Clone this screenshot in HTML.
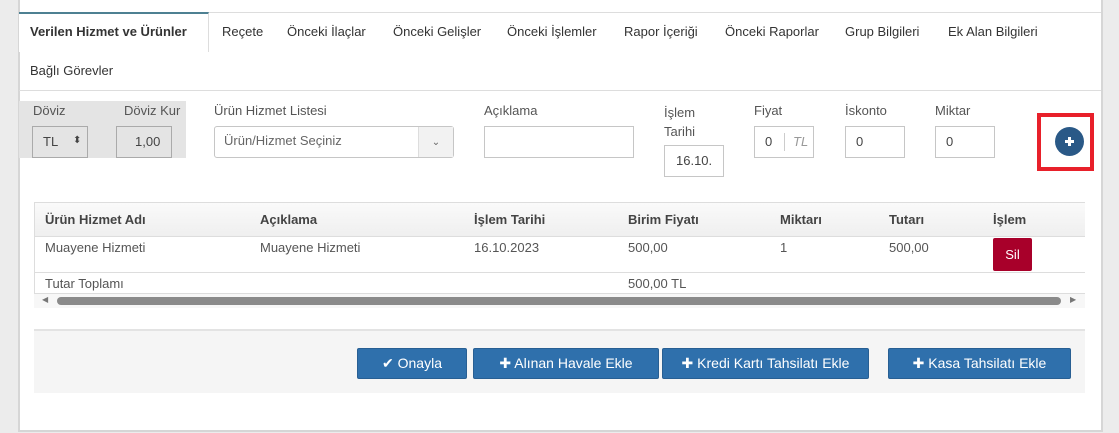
<!DOCTYPE html>
<html><head><meta charset="utf-8"><style>
*{box-sizing:border-box;margin:0;padding:0}
body{width:1119px;height:433px;background:#ececec;font-family:"Liberation Sans",sans-serif;font-size:13px;color:#555;position:relative;overflow:hidden}
.a{position:absolute;white-space:nowrap}
.panel{position:absolute;left:18px;top:-2px;width:1085px;height:434px;background:#fff;border:2px solid #d6d6d6;border-top:none}
.inp{position:absolute;border:1px solid #c6c6c6;background:#fff;height:32px;line-height:30px;padding-left:10px;color:#444}
.btn{position:absolute;top:348px;height:31px;background:#2f70ac;border:1px solid #285f93;border-radius:2px;color:#fff;font-size:14px;line-height:29px;text-align:center}
</style></head><body>
<div class="panel"></div>
<div class="a" style="left:19px;top:12px;width:190px;height:40px;border-top:2px solid #4e8092;border-right:1px solid #ddd;background:#fff"></div>
<div class="a" style="left:209px;top:12px;width:892px;height:1px;background:#ddd"></div>
<div class="a" style="left:30px;top:24px;font-weight:bold;color:#333">Verilen Hizmet ve Ürünler</div>
<div class="a" style="left:222px;top:24px;color:#333">Reçete</div>
<div class="a" style="left:287px;top:24px;color:#333">Önceki İlaçlar</div>
<div class="a" style="left:393px;top:24px;color:#333">Önceki Gelişler</div>
<div class="a" style="left:507px;top:24px;color:#333">Önceki İşlemler</div>
<div class="a" style="left:624px;top:24px;color:#333">Rapor İçeriği</div>
<div class="a" style="left:725px;top:24px;color:#333">Önceki Raporlar</div>
<div class="a" style="left:845px;top:24px;color:#333">Grup Bilgileri</div>
<div class="a" style="left:948px;top:24px;color:#333">Ek Alan Bilgileri</div>
<div class="a" style="left:30px;top:63px;color:#333">Bağlı Görevler</div>
<div class="a" style="left:19px;top:90px;width:1082px;height:1px;background:#ddd"></div>
<div class="a" style="left:19px;top:101px;width:167px;height:57px;background:#e4e4e4"></div>
<div class="a" style="left:33px;top:103px">Döviz</div>
<div class="a" style="left:124px;top:103px">Döviz Kur</div>
<div class="inp" style="left:32px;top:126px;width:56px;background:#e4e4e4;border-color:#aaa">TL<span style="position:absolute;left:40px;top:-1px;font-size:10px">⬍</span></div>
<div class="inp" style="left:116px;top:126px;width:56px;background:#e4e4e4;border-color:#aaa;padding-left:18px">1,00</div>
<div class="a" style="left:214px;top:103px">Ürün Hizmet Listesi</div>
<div class="inp" style="top:126px;border-radius:3px;left:214px;width:240px;color:#666;padding-left:9px;line-height:28px">Ürün/Hizmet Seçiniz<span style="position:absolute;right:0;top:0;width:35px;height:30px;background:#f2f2f2;border-left:1px solid #ddd;text-align:center;font-size:10px;line-height:32px">⌄</span></div>
<div class="a" style="left:484px;top:103px">Açıklama</div>
<div class="inp" style="left:484px;top:126px;width:150px"></div>
<div class="a" style="left:664px;top:103px;line-height:19px">İşlem<br>Tarihi</div>
<div class="inp" style="left:664px;top:145px;width:60px;padding-left:11px">16.10.</div>
<div class="a" style="left:754px;top:103px">Fiyat</div>
<div class="inp" style="left:754px;top:126px;width:60px">0<span style="position:absolute;left:29px;top:6px;width:1px;height:18px;background:#ccc"></span><i style="position:absolute;left:38px;color:#999">TL</i></div>
<div class="a" style="left:845px;top:103px">İskonto</div>
<div class="inp" style="left:845px;top:126px;width:60px">0</div>
<div class="a" style="left:935px;top:103px">Miktar</div>
<div class="inp" style="left:935px;top:126px;width:60px">0</div>
<div class="a" style="left:1037px;top:113px;width:57px;height:58px;border:4px solid #e8202a"></div>
<div class="a" style="left:1055px;top:127px;width:29px;height:29px;border-radius:50%;background:#2a5987"></div>
<div class="a" style="left:1065px;top:140px;width:9px;height:3px;background:#fff"></div>
<div class="a" style="left:1068px;top:137px;width:3px;height:9px;background:#fff"></div>
<div class="a" style="left:34px;top:202px;width:1051px;height:35px;background:linear-gradient(#fafafa,#efefef);border-top:1px solid #ddd;border-bottom:1px solid #ddd;border-left:1px solid #ddd"></div>
<div class="a" style="left:34px;top:237px;width:1px;height:61px;background:#ddd"></div>
<div class="a" style="left:34px;top:272px;width:1051px;height:1px;background:#ddd"></div>
<div class="a" style="left:34px;top:293px;width:1051px;height:1px;background:#ddd"></div>
<div class="a" style="left:34px;top:294px;width:1051px;height:14px;background:#f7f7f7"></div>
<div class="a" style="left:57px;top:297px;width:1004px;height:8px;border-radius:4px;background:#8a8a8a"></div>
<div class="a" style="left:42px;top:295px;font-size:8px;color:#777">◀</div>
<div class="a" style="left:1070px;top:295px;font-size:8px;color:#777">▶</div>
<div class="a" style="top:212px;left:45px;font-weight:bold;color:#444">Ürün Hizmet Adı</div>
<div class="a" style="top:212px;left:260px;font-weight:bold;color:#444">Açıklama</div>
<div class="a" style="top:212px;left:474px;font-weight:bold;color:#444">İşlem Tarihi</div>
<div class="a" style="top:212px;left:628px;font-weight:bold;color:#444">Birim Fiyatı</div>
<div class="a" style="top:212px;left:780px;font-weight:bold;color:#444">Miktarı</div>
<div class="a" style="top:212px;left:889px;font-weight:bold;color:#444">Tutarı</div>
<div class="a" style="top:212px;left:993px;font-weight:bold;color:#444">İşlem</div>
<div class="a" style="top:240px;left:45px">Muayene Hizmeti</div>
<div class="a" style="top:240px;left:260px">Muayene Hizmeti</div>
<div class="a" style="top:240px;left:474px">16.10.2023</div>
<div class="a" style="top:240px;left:628px">500,00</div>
<div class="a" style="top:240px;left:780px">1</div>
<div class="a" style="top:240px;left:889px">500,00</div>
<div class="a" style="top:238px;left:993px;width:39px;height:33px;background:#a8002a;border-radius:2px;color:#fff;text-align:center;line-height:33px">Sil</div>
<div class="a" style="top:276px;left:45px">Tutar Toplamı</div>
<div class="a" style="top:276px;left:628px">500,00 TL</div>
<div class="a" style="left:34px;top:329px;width:1051px;height:64px;background:#f5f5f5;border-top:2px solid #e3e3e3"></div>
<div class="btn" style="left:357px;width:110px">✔ Onayla</div>
<div class="btn" style="left:473px;width:186px">✚ Alınan Havale Ekle</div>
<div class="btn" style="left:662px;width:207px">✚ Kredi Kartı Tahsilatı Ekle</div>
<div class="btn" style="left:888px;width:183px">✚ Kasa Tahsilatı Ekle</div>
</body></html>
